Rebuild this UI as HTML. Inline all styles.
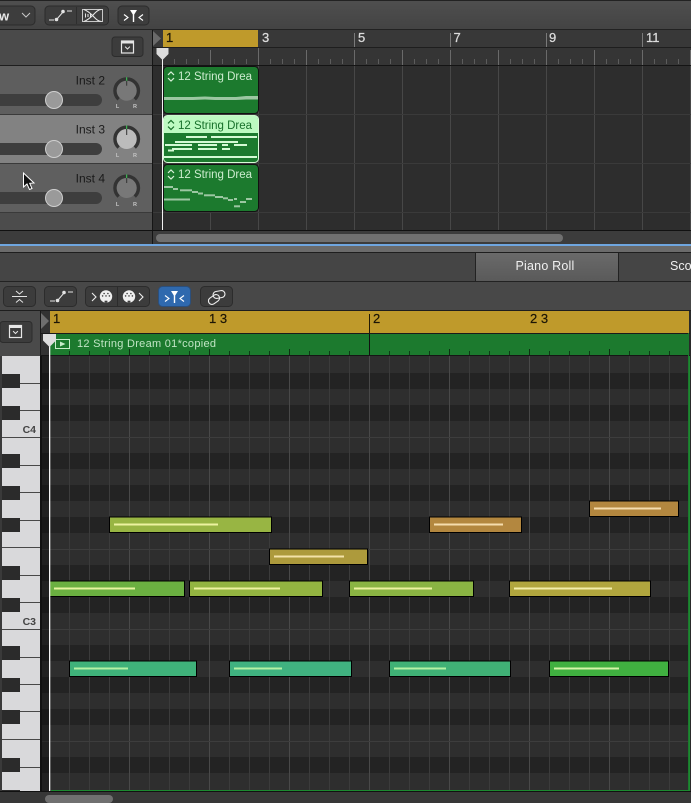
<!DOCTYPE html>
<html><head><meta charset="utf-8">
<style>
html,body{margin:0;padding:0;background:#2d2d2d;width:691px;height:803px;overflow:hidden}
svg{display:block;font-family:"Liberation Sans",sans-serif}
</style></head><body>
<svg width="691" height="803" viewBox="0 0 691 803" xmlns="http://www.w3.org/2000/svg">
<defs>
<pattern id="topv" width="48" height="10" patternUnits="userSpaceOnUse" x="162" y="0"><rect x="0" width="1" height="10" fill="#474747"/></pattern>
<pattern id="topt" width="12" height="10" patternUnits="userSpaceOnUse" x="162" y="56"><rect x="0" y="3" width="1" height="5" fill="#5c5c5c"/></pattern>
<pattern id="topb" width="48" height="20" patternUnits="userSpaceOnUse" x="162" y="48"><rect x="0" y="2" width="1" height="15" fill="#6a6a6a"/></pattern>
<pattern id="gv" width="20" height="10" patternUnits="userSpaceOnUse" x="49" y="0"><rect width="1" height="10" fill="#3b3b3b"/></pattern>
<pattern id="gv2" width="80" height="10" patternUnits="userSpaceOnUse" x="129" y="0"><rect width="1" height="10" fill="#494949"/></pattern>
<pattern id="rt" width="20" height="10" patternUnits="userSpaceOnUse" x="49" y="0"><rect width="1" height="10" fill="#0d3b16"/></pattern>
<pattern id="rt2" width="80" height="10" patternUnits="userSpaceOnUse" x="129" y="0"><rect width="1" height="10" fill="#0d2f12"/></pattern>
<linearGradient id="tab" x1="0" y1="0" x2="0" y2="1"><stop offset="0" stop-color="#6a6a6a"/><stop offset="1" stop-color="#5a5a5a"/></linearGradient>
<linearGradient id="bar" x1="0" y1="0" x2="0" y2="1"><stop offset="0" stop-color="#4f4f4f"/><stop offset="1" stop-color="#434343"/></linearGradient>
<g id="chev"><path d="M-3 -1.6 L0 -4.5 L3 -1.6 M-3 1.6 L0 4.5 L3 1.6" fill="none" stroke-width="1.2"/></g>
<g id="boxicon"><rect x="-6" y="-6" width="12" height="12" fill="none" stroke="#e6e6e6" stroke-width="1.2"/><rect x="-6" y="-6" width="12" height="2.5" fill="#e6e6e6"/><path d="M-2.4 -0.4 L0 2 L2.4 -0.4" fill="none" stroke="#e6e6e6" stroke-width="1"/></g>
<g id="autom"><path d="M0 11 H5 M8 10 L14 3 M18 2 H23" fill="none" stroke="#e4e4e4" stroke-width="1"/><circle cx="7.500" cy="10.500" r="1.800" fill="#e4e4e4"/><circle cx="14" cy="2.500" r="1.800" fill="#e4e4e4"/></g>
<g id="filt"><path d="M-3.500 -5.500 H3.500 L0.700 -1 V6.500 H-0.700 V-1 Z" fill="#fff"/><path d="M-9.500 -1 L-5.500 2 L-9.500 5 M9.500 -1 L5.500 2 L9.500 5" fill="none" stroke="#fff" stroke-width="1.100"/></g>
<g id="midi"><circle r="6.200" fill="#efefef"/><circle cx="-3.400" cy="-0.600" r=".8" fill="#3d3d3d"/><circle cx="-1.900" cy="-3" r=".8" fill="#3d3d3d"/><circle cx="1.900" cy="-3" r=".8" fill="#3d3d3d"/><circle cx="3.400" cy="-0.600" r=".8" fill="#3d3d3d"/><circle cx="0" cy="-0.600" r=".8" fill="#3d3d3d"/><rect x="-1.400" y="4.200" width="2.800" height="2" fill="#3d3d3d"/></g>
</defs>

<!-- top toolbar -->
<rect width="691" height="30" fill="url(#bar)"/>
<rect width="691" height="1" fill="#222"/>
<rect x="-6" y="6" width="41" height="19" rx="4" fill="#3d3d3d" stroke="#2c2c2c"/>
<text x="-1" y="20.500" font-size="13" font-weight="bold" fill="#e8e8e8">w</text>
<path d="M22 13 L26 17 L30 13" fill="none" stroke="#c8c8c8" stroke-width="1"/>
<rect x="45" y="6" width="63.500" height="19" rx="4" fill="#3d3d3d" stroke="#2c2c2c"/>
<rect x="76" y="7" width="1" height="17" fill="#2e2e2e"/>
<use href="#autom" x="49" y="9"/>
<path d="M82.500 9.500 H102.500 V21.500 H82.500 Z" fill="none" stroke="#c8c8c8" stroke-width="1"/>
<path d="M84 9.500 C89 11.500 91 14 94 17 C96.500 19.500 98.500 21.500 101.500 21.500 M84 21.500 C89 19.500 91 17 94 14 C96.500 11.500 98.500 9.500 101.500 9.500" fill="none" stroke="#e6e6e6" stroke-width="1.100"/>
<path d="M85.500 13.500V17.500 M88 14V17 M90.500 13.500V17.500" stroke="#e6e6e6" stroke-width="1"/>
<rect x="118" y="6" width="31" height="19" rx="4" fill="#3d3d3d" stroke="#2c2c2c"/>
<use href="#filt" x="133.500" y="15.500"/>

<!-- track header column -->
<rect x="0" y="30" width="152" height="35" fill="#4a4a4a"/>
<rect x="0" y="29" width="691" height="1" fill="#222"/>
<rect x="112" y="37" width="31" height="19.500" rx="3" fill="#3c3c3c" stroke="#2c2c2c"/>
<use href="#boxicon" x="127.500" y="47"/>
<rect x="0" y="66" width="152" height="48" fill="#5e5e5e"/>
<rect x="0" y="115" width="152" height="48" fill="#828282"/>
<rect x="0" y="164" width="152" height="48" fill="#5f5f5f"/>
<rect x="0" y="213" width="152" height="17" fill="#4c4c4c"/>
<rect x="0" y="65" width="152" height="1" fill="#1e1e1e"/>
<rect x="0" y="114" width="152" height="1" fill="#3a3a3a"/>
<rect x="0" y="163" width="152" height="1" fill="#3a3a3a"/>
<rect x="0" y="212" width="152" height="1" fill="#3a3a3a"/>
<g font-size="12" fill="#141414" text-anchor="end" opacity=".92">
<text x="105" y="84.500">Inst 2</text><text x="105" y="133.500">Inst 3</text><text x="105" y="182.500">Inst 4</text>
</g>
<!-- sliders -->
<rect x="-10" y="94" width="112" height="12" rx="6" fill="#3e3e3e"/>
<rect x="-10" y="143" width="112" height="12" rx="6" fill="#3e3e3e"/>
<rect x="-10" y="192" width="112" height="12" rx="6" fill="#3e3e3e"/>
<g fill="#9a9a9a" stroke="#cfcfcf" stroke-width="1">
<circle cx="54" cy="100" r="8.500"/><circle cx="54" cy="149" r="8.500"/><circle cx="54" cy="198" r="8.500"/>
</g>
<!-- knobs -->
<g>
<g transform="translate(126.700,90.700)"><path d="M-8 8.500A11.700 11.700 0 1 1 8 8.500" fill="none" stroke="#333" stroke-width="3.500"/><circle r="10" fill="#787878"/><rect x="-.5" y="-13.500" width="1" height="4" fill="#3fd35a"/><rect x="-.5" y="-10" width="1" height="5" fill="#333"/></g>
<g transform="translate(126.700,139)"><path d="M-8 8.500A11.700 11.700 0 1 1 8 8.500" fill="none" stroke="#333" stroke-width="3.500"/><circle r="10" fill="#bcbcbc"/><rect x="-.5" y="-13.500" width="1" height="4" fill="#3fd35a"/><rect x="-.5" y="-10" width="1" height="6" fill="#333"/></g>
<g transform="translate(126.700,188)"><path d="M-8 8.500A11.700 11.700 0 1 1 8 8.500" fill="none" stroke="#333" stroke-width="3.500"/><circle r="10" fill="#787878"/><rect x="-.5" y="-13.500" width="1" height="4" fill="#3fd35a"/><rect x="-.5" y="-10" width="1" height="5" fill="#333"/></g>
<g font-size="5.500" font-weight="bold" fill="#c4c4c4" text-anchor="middle">
<text x="117.500" y="108">L</text><text x="135" y="108">R</text>
<text x="117.500" y="157">L</text><text x="135" y="157">R</text>
<text x="117.500" y="206">L</text><text x="135" y="206">R</text>
</g>
</g>
<!-- cursor -->
<path d="M23.500 173 V187 L27 184 L29.500 189.500 L32 188.500 L29.700 183.300 L34 183 Z" fill="#111" stroke="#fff" stroke-width="1"/>

<!-- top arrange -->
<rect x="153" y="30" width="538" height="18" fill="#383838"/>
<rect x="153" y="48" width="538" height="17" fill="#353535"/>
<rect x="153" y="66" width="538" height="164" fill="#2d2d2d"/>
<rect x="152" y="30" width="1" height="200" fill="#151515"/>
<rect x="162" y="56" width="529" height="9" fill="url(#topt)"/>
<rect x="162" y="48" width="529" height="17" fill="url(#topb)"/>
<rect x="162" y="66" width="529" height="164" fill="url(#topv)"/>
<rect x="354" y="33" width="1" height="15" fill="#7a7a7a"/><rect x="450" y="33" width="1" height="15" fill="#7a7a7a"/><rect x="546" y="33" width="1" height="15" fill="#7a7a7a"/><rect x="642" y="33" width="1" height="15" fill="#7a7a7a"/>
<rect x="258" y="48" width="1" height="17" fill="#6a6a6a"/>
<rect x="153" y="47" width="538" height="1" fill="#1e1e1e"/>
<rect x="153" y="65" width="538" height="1" fill="#141414"/>
<rect x="153" y="114" width="538" height="1" fill="#3a3a3a"/><rect x="153" y="163" width="538" height="1" fill="#3a3a3a"/><rect x="153" y="212" width="538" height="1" fill="#3a3a3a"/>
<path d="M153 31 L161 38.500 L153 46 Z" fill="#6a6a6a"/>
<rect x="163" y="30" width="95" height="17" fill="#bf9a2b"/>
<g font-size="13" fill="#dcdcdc" stroke="#dcdcdc" stroke-width=".25">
<text x="166" y="42" fill="#1c1606" stroke="#1c1606">1</text><text x="262" y="42">3</text><text x="358" y="42">5</text><text x="453.500" y="42">7</text><text x="549" y="42">9</text><text x="646" y="42">11</text>
</g>

<!-- regions -->
<rect x="163.500" y="66.500" width="95" height="47" rx="4" fill="#1c7a2e" stroke="#111"/>
<rect x="163.500" y="115.500" width="95" height="47" rx="4" fill="#1c7a2e" stroke="#d8fcd8"/>
<path d="M164 133 V119.500 a4 4 0 0 1 4 -4 H254 a4 4 0 0 1 4 4 V133 Z" fill="#bdfac1"/>
<rect x="163.500" y="164.500" width="95" height="47" rx="4" fill="#1c7a2e" stroke="#111"/>
<g font-size="11.500">
<text x="178" y="80" fill="#cdeccf" textLength="74" lengthAdjust="spacing">12 String Drea</text>
<text x="178" y="129" fill="#17702a" textLength="74" lengthAdjust="spacing">12 String Drea</text>
<text x="178" y="178" fill="#cdeccf" textLength="74" lengthAdjust="spacing">12 String Drea</text>
</g>
<use href="#chev" x="171" y="76.500" stroke="#d8f0d8"/>
<use href="#chev" x="171" y="125" stroke="#17702a"/>
<use href="#chev" x="171" y="174.500" stroke="#d8f0d8"/>
<path d="M164 100 H186 L193 100 L205 99.500 L215 100 H236 L246 99.500 H258 V96 H246 L236 97 H215 L205 96.500 L193 97 L186 97 H164 Z" fill="#9cc7a2"/>
<g fill="#d4fad4">
<rect x="186" y="136" width="21" height="2"/><rect x="211" y="136" width="46" height="2"/>
<rect x="175" y="141" width="63" height="2"/>
<rect x="165" y="144" width="27" height="2"/><rect x="198" y="144" width="19" height="2"/><rect x="222" y="144" width="6" height="2"/><rect x="234" y="144" width="13" height="2"/>
<rect x="172" y="148" width="20" height="2"/><rect x="198" y="148" width="19" height="2"/><rect x="222" y="148" width="8" height="2"/>
<rect x="168" y="149.500" width="6" height="2"/>
<rect x="164" y="156" width="93" height="2"/>
</g>
<g fill="#9cc7a2">
<rect x="164" y="186" width="9" height="2"/><rect x="173" y="188" width="5" height="2"/><rect x="180" y="189.300" width="12" height="2"/><rect x="192" y="191" width="6" height="2"/><rect x="198" y="192.500" width="5" height="2"/><rect x="204" y="194.300" width="11" height="2"/><rect x="215" y="196" width="8" height="2"/><rect x="223" y="197.300" width="5" height="2"/><rect x="228" y="199" width="5" height="2"/><rect x="234" y="198" width="3" height="2"/><rect x="240" y="201" width="6" height="2"/><rect x="246" y="198" width="6" height="2"/><rect x="234" y="205.300" width="6" height="2"/><rect x="164" y="198.500" width="26" height="2"/>
</g>
<!-- top playhead -->
<rect x="162" y="58" width="1" height="172" fill="#f2f2f2"/>
<path d="M156.500 48 H168.500 V54 L162.500 60 L156.500 54 Z" fill="#dcdcdc"/>

<!-- top scroll + separators -->
<rect x="0" y="230" width="691" height="1" fill="#111"/>
<rect x="0" y="231" width="691" height="13" fill="#3c3c3c"/>
<rect x="152" y="231" width="1" height="13" fill="#151515"/>
<rect x="156" y="234" width="407" height="8" rx="4" fill="#707070"/>
<rect x="0" y="244" width="691" height="2" fill="#6fa6e0"/>
<rect x="0" y="246" width="691" height="6" fill="#6b6b6b"/>
<rect x="0" y="252" width="691" height="1" fill="#1e1e1e"/>

<!-- tab bar -->
<rect x="0" y="253" width="691" height="28" fill="#454545"/>
<rect x="476" y="253" width="142" height="28" fill="url(#tab)"/>
<rect x="475" y="253" width="1" height="28" fill="#222"/>
<rect x="618" y="253" width="1" height="28" fill="#222"/>
<rect x="0" y="281" width="691" height="1" fill="#222"/>
<text x="545" y="270" font-size="12.500" fill="#f0f0f0" text-anchor="middle" letter-spacing=".2">Piano Roll</text>
<text x="670" y="270" font-size="12.500" fill="#f0f0f0">Sco</text>

<!-- piano toolbar -->
<rect x="0" y="282" width="691" height="28" fill="#484848"/>
<rect x="3.500" y="286.500" width="32" height="20" rx="4" fill="#3c3c3c" stroke="#2c2c2c"/>
<path d="M16 291 L19.500 294 L23 291 M12 296.500 H27 M16 302.500 L19.500 299.500 L23 302.500" fill="none" stroke="#e4e4e4" stroke-width="1"/>
<rect x="44.500" y="286.500" width="32" height="20" rx="4" fill="#3c3c3c" stroke="#2c2c2c"/>
<use href="#autom" x="50" y="290"/>
<rect x="85.500" y="286.500" width="64" height="20" rx="4" fill="#3c3c3c" stroke="#2c2c2c"/>
<rect x="117" y="287" width="1" height="19" fill="#2c2c2c"/>
<path d="M92 293 L96 297 L92 301 M139 293 L143 297 L139 301" fill="none" stroke="#eee" stroke-width="1.100"/>
<use href="#midi" x="106" y="296.500"/>
<use href="#midi" x="129" y="296.500"/>
<rect x="158.500" y="286.500" width="32" height="20" rx="4" fill="#2f69ae" stroke="#2b4f7c"/>
<use href="#filt" x="174.500" y="296.500"/>
<rect x="200.500" y="286.500" width="32" height="20" rx="4" fill="#3c3c3c" stroke="#2c2c2c"/>
<g fill="none" stroke="#eee" stroke-width="1.100"><rect x="208" y="296" width="12" height="7" rx="3.500" transform="rotate(-35 214 299.500)"/><rect x="213" y="291" width="12" height="7" rx="3.500" transform="rotate(-10 219 294.500)"/></g>

<!-- piano roll header -->
<rect x="0" y="310" width="691" height="1" fill="#1e1e1e"/>
<rect x="0" y="311" width="41" height="45" fill="#4a4a4a"/>
<rect x="0" y="321.500" width="32" height="21" rx="3" fill="#3c3c3c" stroke="#2c2c2c"/>
<use href="#boxicon" x="15.500" y="331.500"/>
<rect x="41" y="311" width="9" height="45" fill="#333"/>
<rect x="40" y="311" width="1" height="45" fill="#1a1a1a"/>
<path d="M41 313 L49 321 L41 329 Z" fill="#6e6e6e"/>
<rect x="50" y="311" width="639" height="22" fill="#bf9a2b"/>
<rect x="689" y="311" width="2" height="45" fill="#2a2a2a"/>
<rect x="369" y="314" width="1" height="19" fill="#221a04"/>
<g font-size="13" fill="#1c1606" stroke="#1c1606" stroke-width=".2">
<text x="53" y="323">1</text><text x="209" y="323">1 3</text><text x="373" y="323">2</text><text x="530" y="323">2 3</text>
</g>
<rect x="41" y="333" width="650" height="1" fill="#1a1a1a"/>
<rect x="50" y="334" width="639" height="22" fill="#1c7a2e"/>
<rect x="50" y="351" width="639" height="4" fill="url(#rt)"/>
<rect x="50" y="349" width="639" height="6" fill="url(#rt2)"/>
<rect x="369" y="334" width="1" height="22" fill="#111"/>
<rect x="55.500" y="339.500" width="14" height="9" fill="none" stroke="#c8ecca" stroke-width="1"/>
<path d="M60 341.500 L65.500 344 L60 346.500 Z" fill="#c8ecca"/>
<text x="77" y="347" font-size="11" fill="#c0e4c4" textLength="139" lengthAdjust="spacing">12 String Dream 01*copied</text>
<rect x="41" y="355" width="650" height="1" fill="#161616"/>

<!-- grid rows -->
<rect x="42" y="356" width="647" height="435" fill="#2e2e2e"/>
<g fill="#232323">
<rect x="42" y="373" width="647" height="16"/><rect x="42" y="405" width="647" height="16"/><rect x="42" y="453" width="647" height="16"/><rect x="42" y="485" width="647" height="16"/><rect x="42" y="517" width="647" height="16"/><rect x="42" y="565" width="647" height="16"/><rect x="42" y="597" width="647" height="16"/><rect x="42" y="645" width="647" height="16"/><rect x="42" y="677" width="647" height="16"/><rect x="42" y="709" width="647" height="16"/><rect x="42" y="757" width="647" height="16"/>
</g>
<rect x="49" y="356" width="640" height="435" fill="url(#gv)"/>
<rect x="49" y="356" width="640" height="435" fill="url(#gv2)"/>
<g fill="#3d3d3d"><rect x="42" y="437" width="647" height="1"/><rect x="42" y="549" width="647" height="1"/><rect x="42" y="629" width="647" height="1"/><rect x="42" y="741" width="647" height="1"/></g>
<rect x="42" y="356" width="7" height="435" fill="#000" opacity=".3"/>

<!-- notes -->
<g stroke="#000" stroke-width="1">
<rect x="109.500" y="517" width="162" height="15.500" fill="#98b543"/>
<rect x="429.500" y="517" width="92" height="15.500" fill="#b3873f"/>
<rect x="589.500" y="501" width="89" height="15.500" fill="#b3873f"/>
<rect x="269.500" y="549" width="98" height="15.500" fill="#ad9a3c"/>
<rect x="49.500" y="581" width="135" height="15.500" fill="#6bb041"/>
<rect x="189.500" y="581" width="133" height="15.500" fill="#93b441"/>
<rect x="349.500" y="581" width="124" height="15.500" fill="#8ab443"/>
<rect x="509.500" y="581" width="141" height="15.500" fill="#b1a63e"/>
<rect x="69.500" y="661" width="127" height="15.500" fill="#3fb27a"/>
<rect x="229.500" y="661" width="122" height="15.500" fill="#40b280"/>
<rect x="389.500" y="661" width="121" height="15.500" fill="#40b176"/>
<rect x="549.500" y="661" width="119" height="15.500" fill="#40b040"/>
</g>
<g>
<rect x="114" y="523.500" width="104" height="2" fill="#ecf2a0"/>
<rect x="434" y="523.500" width="69" height="2" fill="#f5dcae"/>
<rect x="594" y="507.500" width="67" height="2" fill="#f5dcae"/>
<rect x="274" y="555.500" width="70" height="2" fill="#f3e2a8"/>
<rect x="54" y="587.500" width="81" height="2" fill="#e6f4a0"/>
<rect x="194" y="587.500" width="86" height="2" fill="#ecf2a0"/>
<rect x="354" y="587.500" width="78" height="2" fill="#ecf2a0"/>
<rect x="514" y="587.500" width="98" height="2" fill="#f3eeaa"/>
<rect x="74" y="667.500" width="54" height="2" fill="#b4f2a4"/>
<rect x="234" y="667.500" width="48" height="2" fill="#b4f2a4"/>
<rect x="394" y="667.500" width="52" height="2" fill="#b4f2a4"/>
<rect x="554" y="667.500" width="65" height="2" fill="#d4f5a8"/>
</g>

<!-- right / bottom edges -->
<rect x="689" y="356" width="1" height="435" fill="#1c8a30"/>
<rect x="688" y="333" width="1" height="458" fill="#1c7a2e"/>
<rect x="690" y="311" width="1" height="492" fill="#2a2a2a"/>
<rect x="51" y="790" width="639" height="1" fill="#1c8a30"/>
<rect x="0" y="791" width="691" height="1" fill="#111"/>
<rect x="0" y="792" width="691" height="11" fill="#373737"/>
<rect x="45" y="795" width="68" height="8" rx="4" fill="#707070"/>

<!-- piano -->
<rect x="0" y="356" width="2" height="435" fill="#3a3a3a"/>
<rect x="2" y="356" width="38" height="435" fill="#d9d9db"/>
<rect x="40" y="356" width="2" height="436" fill="#111"/>
<g fill="#484848">
<rect x="20" y="383" width="20" height="1"/><rect x="20" y="410" width="20" height="1"/><rect x="2" y="437" width="38" height="1"/><rect x="20" y="465" width="20" height="1"/><rect x="20" y="492" width="20" height="1"/><rect x="20" y="520" width="20" height="1"/><rect x="2" y="547" width="38" height="1"/><rect x="20" y="575" width="20" height="1"/><rect x="20" y="602" width="20" height="1"/><rect x="2" y="629" width="38" height="1"/><rect x="20" y="657" width="20" height="1"/><rect x="20" y="684" width="20" height="1"/><rect x="20" y="711" width="20" height="1"/><rect x="2" y="739" width="38" height="1"/><rect x="20" y="767" width="20" height="1"/>
</g>
<g fill="#2b2b2b">
<rect x="2" y="374" width="18" height="14"/><rect x="2" y="406" width="18" height="14"/><rect x="2" y="454" width="18" height="14"/><rect x="2" y="486" width="18" height="14"/><rect x="2" y="518" width="18" height="14"/><rect x="2" y="566" width="18" height="14"/><rect x="2" y="598" width="18" height="14"/><rect x="2" y="646" width="18" height="14"/><rect x="2" y="678" width="18" height="14"/><rect x="2" y="710" width="18" height="14"/><rect x="2" y="758" width="18" height="14"/><rect x="2" y="790" width="18" height="1"/>
</g>
<g font-size="10.500" font-weight="bold" fill="#444" text-anchor="end">
<text x="36" y="433">C4</text><text x="36" y="625">C3</text>
</g>

<!-- piano playhead -->
<rect x="49" y="344" width="1.300" height="447" fill="#f4f4f4"/>
<path d="M43 334 H56 V340.500 L49.500 347 L43 340.500 Z" fill="#dedede"/>
</svg>
</body></html>
